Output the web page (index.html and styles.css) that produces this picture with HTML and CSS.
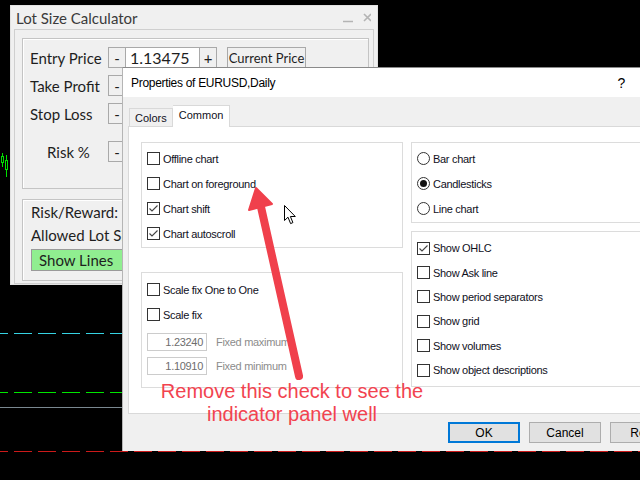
FILE: index.html
```html
<!DOCTYPE html>
<html>
<head>
  <meta charset="utf-8">
  <link rel="stylesheet" href="styles.css">
</head>
<body>
  <!-- chart behind the windows -->
  <svg class="candles" viewBox="0 0 14 40" width="14" height="40">
    <line x1="2.5" y1="13" x2="2.5" y2="27" stroke="#00e000" />
    <rect x="1.5" y="16.5" width="2" height="6" fill="#000" stroke="#00e000" />
    <line x1="6.5" y1="15" x2="6.5" y2="37" stroke="#00e000" />
    <rect x="5.5" y="20.5" width="2" height="9" fill="#000" stroke="#00e000" />
    <line x1="10.5" y1="2" x2="10.5" y2="18" stroke="#00e000" />
  </svg>
  <div class="level level-cyan"></div>
  <div class="level level-green"></div>
  <div class="level level-gray"></div>
  <div class="level level-red"></div>

  <div class="lot-panel">
    <div class="lot-title">
      <span>Lot Size Calculator</span>
      <svg class="lot-controls" viewBox="0 0 30 12" width="30" height="12">
        <line x1="2" y1="9.5" x2="12" y2="9.5" stroke="#b4b4b4" stroke-width="1.5" />
        <path d="M23 2 L30 9 M30 2 L23 9" stroke="#b4b4b4" stroke-width="1.6" />
      </svg>
    </div>
    <div class="lot-frame">
      <div class="lot-box lot-inputs">
        <div class="lot-row">
          <div class="lot-label">Entry Price</div>
          <div class="lot-btn">-</div>
          <div class="lot-input">1.13475</div>
          <div class="lot-btn">+</div>
          <div class="lot-btn wide">Current Price</div>
        </div>
        <div class="lot-row">
          <div class="lot-label">Take Profit</div>
          <div class="lot-btn">-</div>
          <div class="lot-input"></div>
          <div class="lot-btn"></div>
        </div>
        <div class="lot-row">
          <div class="lot-label">Stop Loss</div>
          <div class="lot-btn">-</div>
          <div class="lot-input"></div>
          <div class="lot-btn"></div>
        </div>
        <div class="lot-row risk">
          <div class="lot-label">Risk %</div>
          <div class="lot-btn">-</div>
          <div class="lot-input"></div>
          <div class="lot-btn"></div>
        </div>
      </div>
      <div class="lot-box lot-result">
        <div class="lot-line">Risk/Reward:</div>
        <div class="lot-line">Allowed Lot Size:</div>
        <div class="lot-green">Show Lines</div>
      </div>
    </div>
  </div>

  <div class="dialog">
    <div class="dlg-title">
      <span>Properties of EURUSD,Daily</span>
      <span class="help">?</span>
    </div>
    <div class="tabs">
      <div class="tab">Colors</div>
      <div class="tab active">Common</div>
    </div>
    <div class="page">
      <div class="col col-left">
        <div class="group g1">
          <div class="opt"><span class="box"></span>Offline chart</div>
          <div class="opt"><span class="box"></span>Chart on foreground</div>
          <div class="opt"><span class="box"><svg viewBox="0 0 11 11" width="11" height="11"><polyline points="1.5,5.5 4,8 9.5,2.5" fill="none" stroke="#444" stroke-width="1.1" /></svg></span>Chart shift</div>
          <div class="opt"><span class="box"><svg viewBox="0 0 11 11" width="11" height="11"><polyline points="1.5,5.5 4,8 9.5,2.5" fill="none" stroke="#444" stroke-width="1.1" /></svg></span>Chart autoscroll</div>
        </div>
        <div class="group g2">
          <div class="opt"><span class="box"></span>Scale fix One to One</div>
          <div class="opt"><span class="box"></span>Scale fix</div>
          <div class="fixed first"><span class="num">1.23240</span><span class="hint">Fixed maximum</span></div>
          <div class="fixed"><span class="num">1.10910</span><span class="hint">Fixed minimum</span></div>
        </div>
      </div>
      <div class="col col-right">
        <div class="group g3">
          <div class="opt"><span class="radio"></span>Bar chart</div>
          <div class="opt"><span class="radio on"></span>Candlesticks</div>
          <div class="opt"><span class="radio"></span>Line chart</div>
        </div>
        <div class="group g4">
          <div class="opt tight"><span class="box"><svg viewBox="0 0 11 11" width="11" height="11"><polyline points="1.5,5.5 4,8 9.5,2.5" fill="none" stroke="#444" stroke-width="1.1" /></svg></span>Show OHLC</div>
          <div class="opt tight"><span class="box"></span>Show Ask line</div>
          <div class="opt tight"><span class="box"></span>Show period separators</div>
          <div class="opt tight"><span class="box"></span>Show grid</div>
          <div class="opt tight"><span class="box"></span>Show volumes</div>
          <div class="opt tight"><span class="box"></span>Show object descriptions</div>
        </div>
      </div>
    </div>
    <div class="dlg-footer">
      <div class="dlg-btn default">OK</div>
      <div class="dlg-btn">Cancel</div>
      <div class="dlg-btn">Reset</div>
    </div>
  </div>

  <!-- annotation drawn over the screenshot -->
  <svg class="pointer-arrow" viewBox="0 0 70 205" width="70" height="205">
    <line x1="21" y1="27" x2="59" y2="196" stroke="#f0404c" stroke-width="8" stroke-linecap="round" />
    <polygon points="16,8 9,30 32,24" fill="#f0404c" stroke="#f0404c" stroke-width="2" stroke-linejoin="round" />
  </svg>
  <svg class="cursor" viewBox="0 0 13 20" width="13" height="20">
    <path d="M0.5 0.5 L0.5 15.5 L4 12.2 L6.6 18.6 L8.9 17.6 L6.4 11.5 L11.3 11.5 Z" fill="#fff" stroke="#000" stroke-width="1" stroke-linejoin="round" />
  </svg>
  <div class="note">Remove this check to see the<br>indicator panel well</div>
</body>
</html>
```

FILE: styles.css
```css
* {
  margin: 0;
  padding: 0;
  box-sizing: border-box;
}

body {
  width: 640px;
  height: 480px;
  background: #000;
  position: relative;
  overflow: hidden;
  font-family: "Liberation Sans", Arial, sans-serif;
}

/* chart */

.candles {
  position: absolute;
  left: 0;
  top: 140px;
}

.level {
  position: absolute;
  left: 0;
  width: 640px;
  height: 1px;
  background-position: 8px 0;
}

.level-cyan {
  top: 333px;
  background-image: repeating-linear-gradient(90deg, transparent 0 6px, #36d3e3 6px 24px);
}

.level-green {
  top: 392px;
  background-image: repeating-linear-gradient(90deg, transparent 0 6px, #00e600 6px 24px);
}

.level-gray {
  top: 407px;
  background: #7a8890;
}

.level-red {
  top: 451px;
  background-image: repeating-linear-gradient(90deg, transparent 0 6px, #cc1a1a 6px 24px);
}

/* lot size panel */

.lot-panel {
  position: absolute;
  left: 10px;
  top: 5px;
  width: 368px;
  height: 280px;
  background: #f0f0f0;
  border: 1px solid #e2e2e2;
  font-family: Lato, "Open Sans", sans-serif;
  color: #1e1e1e;
}

.lot-title {
  height: 23px;
  display: flex;
  align-items: center;
  padding: 0 6px 0 5px;
  font-size: 15px;
  color: #3a3a3a;
}

.lot-controls {
  margin-left: auto;
}

.lot-frame {
  height: 255px;
  margin: 0 3px;
  border: 1px solid #cfcfcf;
  padding: 8px 4px 0 7px;
}

.lot-box {
  border: 1px solid #c4c4c4;
  box-shadow: inset 1px 1px 0 #fff;
}

.lot-inputs {
  height: 151px;
  padding: 8px 0 0 7px;
}

.lot-row {
  display: flex;
  align-items: center;
  height: 21px;
  margin-bottom: 7px;
}

.lot-row.risk {
  margin-top: 17px;
}

.lot-label {
  width: 78px;
  font-size: 15px;
}

.lot-row.risk .lot-label {
  padding-left: 17px;
}

.lot-btn {
  height: 21px;
  min-width: 18px;
  border: 1px solid #a9a9a9;
  background: #f0f0f0;
  display: flex;
  align-items: center;
  justify-content: center;
  font-size: 15px;
}

.lot-btn.wide {
  width: 79px;
  margin-left: 10px;
  font-size: 13px;
}

.lot-input {
  width: 73px;
  height: 21px;
  border-top: 1px solid #a9a9a9;
  border-bottom: 1px solid #a9a9a9;
  background: #fff;
  padding-left: 4px;
  display: flex;
  align-items: center;
  font-size: 16px;
}

.lot-result {
  height: 82px;
  margin-top: 10px;
  padding: 1px 0 0 8px;
}

.lot-line {
  height: 23px;
  line-height: 23px;
  font-size: 15px;
  white-space: nowrap;
}

.lot-green {
  width: 100px;
  height: 22px;
  margin-top: 2px;
  padding-left: 7px;
  background: #90ee90;
  border: 1px solid #9a9a9a;
  font-size: 15px;
  line-height: 20px;
}

/* properties dialog */

.dialog {
  position: absolute;
  left: 122px;
  top: 67px;
  width: 540px;
  height: 384px;
  background: #f0f0f0;
  border-top: 1px solid #8a8a8a;
  border-left: 1px solid #b5b5b5;
  display: flex;
  flex-direction: column;
  font-size: 11px;
  color: #10101c;
}

.dlg-title {
  height: 29px;
  flex-shrink: 0;
  display: flex;
  align-items: center;
  padding-left: 8px;
  background: #fff;
  font-size: 12px;
  letter-spacing: -0.3px;
  color: #000;
}

.help {
  margin-left: auto;
  margin-right: 37px;
  font-size: 14px;
}

.tabs {
  height: 29px;
  flex-shrink: 0;
  display: flex;
  align-items: flex-end;
  padding: 8px 0 0 6px;
}

.tab {
  height: 18px;
  padding: 0 5px;
  border: 1px solid #d9d9d9;
  border-bottom: none;
  display: flex;
  align-items: center;
}

.tab.active {
  height: 22px;
  margin-bottom: -1px;
  padding: 0 6px 4px;
  border-left: none;
  background: #fff;
  position: relative;
  z-index: 1;
}

.page {
  height: 288px;
  flex-shrink: 0;
  margin-left: 5px;
  background: #fff;
  border: 1px solid #d9d9d9;
  border-right: none;
  padding: 15px 0 0 12px;
  display: flex;
  gap: 8px;
}

.col {
  flex-shrink: 0;
}

.col-left {
  width: 262px;
}

.col-right {
  width: 300px;
}

.group {
  border: 1px solid #dcdcdc;
  padding-left: 5px;
}

.g1 {
  padding-top: 3px;
  padding-bottom: 1px;
}

.g2 {
  margin-top: 24px;
  padding-top: 4px;
  padding-bottom: 9px;
}

.g3 {
  padding-top: 3px;
  padding-bottom: 1px;
}

.g4 {
  margin-top: 8px;
  padding-top: 4px;
  padding-bottom: 4px;
}

.opt {
  height: 25px;
  display: flex;
  align-items: center;
  letter-spacing: -0.3px;
  white-space: nowrap;
}

.opt.tight {
  height: 24.4px;
}

.box {
  width: 13px;
  height: 13px;
  margin-right: 3px;
  border: 1px solid #333;
  background: #fff;
  display: flex;
  align-items: center;
  justify-content: center;
  flex-shrink: 0;
}

.radio {
  width: 13px;
  height: 13px;
  margin-right: 3px;
  border: 1px solid #333;
  border-radius: 50%;
  background: #fff;
  display: flex;
  align-items: center;
  justify-content: center;
  flex-shrink: 0;
}

.radio.on::after {
  content: '';
  width: 7px;
  height: 7px;
  border-radius: 50%;
  background: #111;
}

.fixed {
  height: 24px;
  display: flex;
  align-items: center;
  letter-spacing: -0.3px;
}

.fixed.first {
  margin-top: 3px;
}

.num {
  width: 60px;
  height: 18px;
  border: 1px solid #cccccc;
  padding-right: 3px;
  text-align: right;
  line-height: 16px;
  color: #6d6d6d;
}

.hint {
  margin-left: 9px;
  color: #8c8c8c;
}

.dlg-footer {
  flex: 1;
  display: flex;
  gap: 9px;
  padding: 8px 0 0 325px;
}

.dlg-btn {
  width: 72px;
  height: 21px;
  flex-shrink: 0;
  border: 1px solid #adadad;
  background: #e1e1e1;
  display: flex;
  align-items: center;
  justify-content: center;
  font-size: 12px;
  color: #000;
}

.dlg-btn.default {
  border: 2px solid #0078d7;
}

/* annotation */

.pointer-arrow {
  position: absolute;
  left: 240px;
  top: 180px;
}

.cursor {
  position: absolute;
  left: 284px;
  top: 205px;
}

.note {
  position: absolute;
  left: 142px;
  top: 380px;
  width: 300px;
  text-align: center;
  font-size: 20px;
  line-height: 23px;
  color: #f2434f;
}
```
